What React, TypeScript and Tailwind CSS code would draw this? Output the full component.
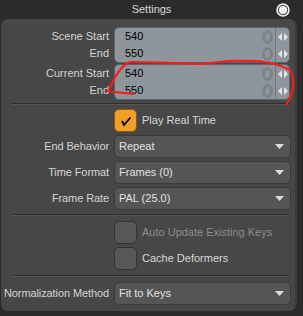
import React from "react";

const font = { fontFamily: '"Liberation Sans", Arial, sans-serif' };

const NumberField = ({ value }: { value: string }) => (
  <div className="flex h-[17px] items-center">
    <span className="flex-1 pl-[10px] text-[11px] text-black">{value}</span>
    <div className="flex w-[16px] items-center justify-center">
      <svg width="11" height="14" viewBox="0 0 11 14">
        <ellipse cx="5.5" cy="7" rx="4" ry="5.5" fill="none" stroke="#7a8187" strokeWidth="2.6" />
      </svg>
    </div>
    <div className="flex h-full w-[14px] items-center justify-center border-l border-[#6f767c]">
      <svg width="10" height="8" viewBox="0 0 10 8">
        <polygon points="4,0 4,8 0,4" fill="#e4e6e8" />
        <polygon points="6,0 6,8 10,4" fill="#e4e6e8" />
      </svg>
    </div>
  </div>
);

const FieldGroup = ({ labels, values }: { labels: string[]; values: string[] }) => (
  <div className="flex">
    <div className="flex w-[108px] flex-col pt-[1px]">
      {labels.map((l, i) => (
        <div key={i} className="flex h-[17px] items-center justify-end text-[11px] text-[#d4d4d4]">
          {l}
        </div>
      ))}
    </div>
    <div className="ml-[5px] w-[176px] rounded-[5px] border border-[#5d6368] bg-[#8e969c]">
      {values.map((v, i) => (
        <NumberField key={i} value={v} />
      ))}
    </div>
  </div>
);

const Dropdown = ({ label, value }: { label: string; value: string }) => (
  <div className="flex items-center">
    <div className="w-[108px] text-right text-[11px] tracking-[-0.1px] text-[#d4d4d4]">{label}</div>
    <div className="ml-[5px] flex h-[23px] w-[177px] items-center justify-between rounded-[5px] border border-[#3a3a3a] bg-[#555555] pl-[4px] pr-[6px]">
      <span className="text-[11px] text-[#e2e2e2]">{value}</span>
      <svg width="9" height="5" viewBox="0 0 9 5">
        <polygon points="0,0 9,0 4.5,5" fill="#dcdcdc" />
      </svg>
    </div>
  </div>
);

const Separator = () => (
  <div className="ml-[10px] w-[278px] border-t border-b border-t-[#2e2e2e] border-b-[#565656]" />
);

const CheckRow = ({ label, checked, disabled }: { label: string; checked?: boolean; disabled?: boolean }) => (
  <div className="flex items-center pl-[113px]">
    <div
      className={
        checked
          ? "flex h-[23px] w-[23px] items-center justify-center rounded-[5px] border border-[#8a5a10] bg-[#f0a028]"
          : "h-[23px] w-[23px] rounded-[5px] border border-[#333333] bg-[#575757]"
      }
    >
      {checked && (
        <svg width="12" height="12" viewBox="0 0 12 12">
          <path d="M2 6 L4 10 L10.5 2.5" stroke="#000" strokeWidth="1.8" fill="none" />
        </svg>
      )}
    </div>
    <span className={"ml-[5px] text-[11px] " + (disabled ? "text-[#8c8c8c]" : "text-[#d8d8d8]")}>{label}</span>
  </div>
);

export default function App() {
  return (
    <div className="relative flex h-[316px] w-[303px] flex-col bg-[#2b2b2b]" style={font}>
      <div className="relative flex h-[19px] items-center justify-center text-[11px] text-[#d8d8d8]">
        Settings
        <svg className="absolute right-[13px] top-[3px]" width="14" height="14" viewBox="0 0 14 14">
          <circle cx="7" cy="7" r="6" fill="#555" stroke="#f2f2f2" strokeWidth="1.5" />
          <circle cx="7" cy="7" r="4" fill="#f4f4f4" />
        </svg>
      </div>
      <div className="ml-[1px] h-[292px] w-[296px] rounded-[7px] border-r-2 border-[#3a3a3a] bg-[#474747] pt-[8px]">
        <FieldGroup labels={["Scene Start", "End"]} values={["540", "550"]} />
        <div className="mt-[1px]">
          <FieldGroup labels={["Current Start", "End"]} values={["540", "550"]} />
        </div>
        <div className="mt-[3px]">
          <Separator />
        </div>
        <div className="mt-[4px]">
          <CheckRow label="Play Real Time" checked />
        </div>
        <div className="mt-[3px] flex flex-col gap-[3px]">
          <Dropdown label="End Behavior" value="Repeat" />
          <Dropdown label="Time Format" value="Frames (0)" />
          <Dropdown label="Frame Rate" value="PAL (25.0)" />
        </div>
        <div className="mt-[4px]">
          <Separator />
        </div>
        <div className="mt-[5px] flex flex-col gap-[3px]">
          <CheckRow label="Auto Update Existing Keys" disabled />
          <CheckRow label="Cache Deformers" />
        </div>
        <div className="mt-[5px]">
          <Separator />
        </div>
        <div className="mt-[5px]">
          <Dropdown label="Normalization Method" value="Fit to Keys" />
        </div>
      </div>
      <svg className="pointer-events-none absolute left-0 top-0" width="303" height="316" viewBox="0 0 303 316">
        <path
          d="M134 94 C125 93 114 92 108 91 C112 84 115 76 120 70 C124 65 127 62 132 62 C150 62 175 63 200 64 C215 63 225 60 240 61 C258 60 275 62 290 70 C294 76 294 85 292 92 C291 97 289 101 286 105"
          stroke="#ff1a1a"
          strokeWidth="2"
          fill="none"
        />
      </svg>
    </div>
  );
}
